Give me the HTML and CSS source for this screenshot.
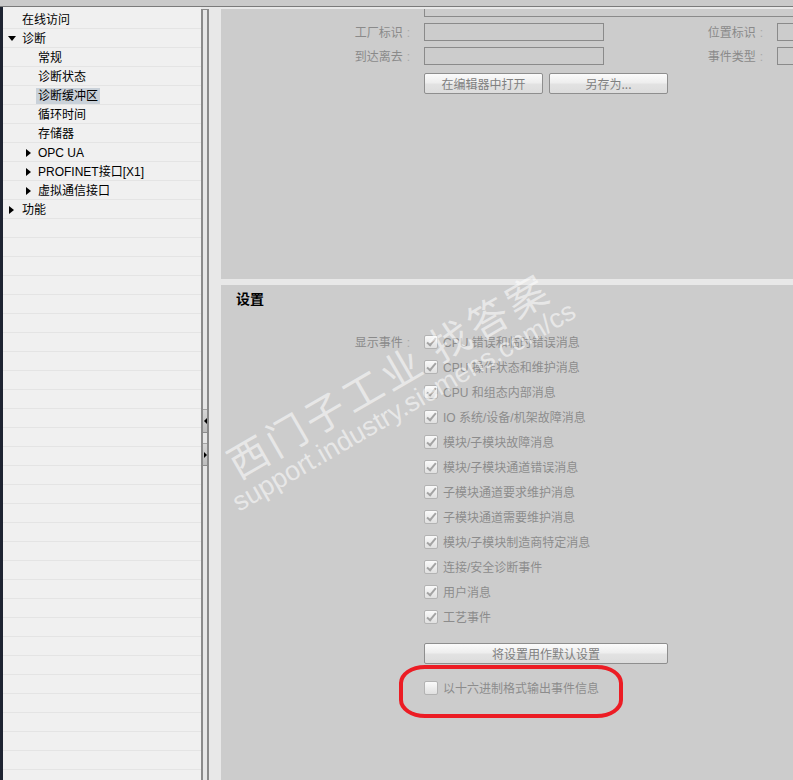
FILE: index.html
```html
<!DOCTYPE html>
<html lang="zh-CN">
<head>
<meta charset="utf-8">
<title>诊断缓冲区</title>
<link rel="stylesheet" href="styles.css">
</head>
<body>
<div class="app">
  <div class="topbar"></div>
  <div class="main">
    <div class="edge"></div>
    <nav class="tree">
      <div class="row l0"><span class="tw"></span>在线访问</div>
      <div class="row l0"><span class="tw"><span class="tri down"></span></span>诊断</div>
      <div class="row l1"><span class="tw"></span>常规</div>
      <div class="row l1"><span class="tw"></span>诊断状态</div>
      <div class="row l1"><span class="tw"></span><span class="sel">诊断缓冲区</span></div>
      <div class="row l1"><span class="tw"></span>循环时间</div>
      <div class="row l1"><span class="tw"></span>存储器</div>
      <div class="row l1"><span class="tw"><span class="tri right"></span></span>OPC UA</div>
      <div class="row l1"><span class="tw"><span class="tri right"></span></span>PROFINET接口[X1]</div>
      <div class="row l1"><span class="tw"><span class="tri right"></span></span>虚拟通信接口</div>
      <div class="row l0"><span class="tw"><span class="tri right r0"></span></span>功能</div>
      <div class="fill"></div>
    </nav>
    <div class="splitter">
      <div class="sbtn"><span class="arr aleft"></span></div>
      <div class="sbtn"><span class="arr aright"></span></div>
    </div>
    <div class="gutter"></div>
    <div class="content">
      <section class="upper">
        <div class="cutbox"></div>
        <div class="fields">
          <div class="lbl">工厂标识<span class="c">:</span></div>
          <div class="box"></div>
          <div class="lbl">位置标识<span class="c">:</span></div>
          <div class="box"></div>
          <div class="lbl">到达离去<span class="c">:</span></div>
          <div class="box"></div>
          <div class="lbl">事件类型<span class="c">:</span></div>
          <div class="box"></div>
        </div>
        <div class="btns">
          <button class="btn">在编辑器中打开</button>
          <button class="btn">另存为...</button>
        </div>
      </section>
      <section class="lower">
        <h2 class="title">设置</h2>
        <div class="events">
          <div class="lbl elbl">显示事件<span class="c">:</span></div>
          <ul class="checks">
            <li><span class="cb on"></span>CPU 错误和临时错误消息</li>
            <li><span class="cb on"></span>CPU 操作状态和维护消息</li>
            <li><span class="cb on"></span>CPU 和组态内部消息</li>
            <li><span class="cb on"></span>IO 系统/设备/机架故障消息</li>
            <li><span class="cb on"></span>模块/子模块故障消息</li>
            <li><span class="cb on"></span>模块/子模块通道错误消息</li>
            <li><span class="cb on"></span>子模块通道要求维护消息</li>
            <li><span class="cb on"></span>子模块通道需要维护消息</li>
            <li><span class="cb on"></span>模块/子模块制造商特定消息</li>
            <li><span class="cb on"></span>连接/安全诊断事件</li>
            <li><span class="cb on"></span>用户消息</li>
            <li><span class="cb on"></span>工艺事件</li>
          </ul>
        </div>
        <div class="actions">
          <button class="btn wide">将设置用作默认设置</button>
          <div class="hexrow"><span class="cb"></span>以十六进制格式输出事件信息</div>
        </div>
      </section>
    </div>
  </div>
  <span class="wm wm1">西门子工业 找答案</span>
  <span class="wm wm2">support.industry.siemens.com/cs</span>
  <div class="mark"></div>
</div>
</body>
</html>
```
FILE: styles.css
```css
html, body {
  margin: 0;
  padding: 0;
}
body {
  font-family: "Liberation Sans", "Noto Sans CJK SC", sans-serif;
  font-size: 12px;
  background: #e8e8e8;
}
.app {
  position: relative;
  width: 793px;
  height: 780px;
  overflow: hidden;
  background: #e8e8e8;
  display: flex;
  flex-direction: column;
}
.topbar {
  flex: none;
  height: 6px;
  background: #cacaca;
  border-bottom: 1px solid #7a7a7a;
}
.main {
  flex: 1;
  min-height: 0;
  display: flex;
}
.edge {
  width: 3px;
  background: #1e2432;
  flex: none;
}
.tree {
  width: 198px;
  flex: none;
  background: #f0f0f0;
  padding-top: 3px;
  display: flex;
  flex-direction: column;
  overflow: hidden;
  color: #000;
}
.row {
  height: 19px;
  box-sizing: border-box;
  border-bottom: 1px solid #e4e4e4;
  padding-top: 1px;
  display: flex;
  align-items: center;
  white-space: nowrap;
  line-height: 16px;
}
.l0 { padding-left: 5px; }
.l1 { padding-left: 21px; }
.tw {
  width: 14px;
  flex: none;
  display: flex;
  align-items: center;
}
.tri { display: block; width: 0; height: 0; }
.tri.down {
  border-top: 5px solid #000;
  border-left: 4px solid transparent;
  border-right: 4px solid transparent;
}
.tri.right {
  margin-left: 2px;
  border-left: 5px solid #000;
  border-top: 4px solid transparent;
  border-bottom: 4px solid transparent;
}
.tri.right.r0 { margin-left: 1px; }
.sel {
  background: #c9d1d9;
  padding: 0 2px;
  margin-left: -2px;
}
.fill {
  flex: 1;
  background: repeating-linear-gradient(to bottom, transparent 0 18px, #e4e4e4 18px 19px);
}
.splitter {
  width: 4px;
  flex: none;
  margin-top: 2px;
  border: 2px solid #8a8a8a;
  border-top-width: 1px;
  border-bottom: none;
  background: #e6e6e6;
  padding-top: 399px;
  display: flex;
  flex-direction: column;
  gap: 10px;
}
.sbtn {
  height: 22px;
  border-top: 1px solid #a4a4a4;
  border-bottom: 1px solid #8c8c8c;
  background: linear-gradient(to bottom, #d6d6d6, #bdbdbd);
  display: flex;
  align-items: center;
  justify-content: center;
}
.sbtn + .sbtn { height: 21px; }
.arr { display: block; width: 0; height: 0; }
.aleft {
  border-right: 3px solid #000;
  border-top: 3px solid transparent;
  border-bottom: 3px solid transparent;
}
.aright {
  border-left: 3px solid #000;
  border-top: 3px solid transparent;
  border-bottom: 3px solid transparent;
}
.gutter {
  width: 12px;
  flex: none;
  background: #e8e8e8;
}
.content {
  flex: 1;
  min-width: 0;
  margin-top: 2px;
  display: flex;
  flex-direction: column;
  gap: 6px;
}
.upper {
  flex: none;
  height: 270px;
  background: #cccccc;
  overflow: hidden;
}
.lower {
  flex: 1;
  background: #cccccc;
  overflow: hidden;
}
.cutbox {
  margin-left: 203px;
  width: 420px;
  height: 8px;
  box-sizing: border-box;
  border: 1px solid #8a8a8a;
  border-top: none;
}
.fields {
  margin-top: 6px;
  display: grid;
  grid-template-columns: 203px 180px 173px 180px;
  grid-auto-rows: 18px;
  row-gap: 6px;
}
.lbl {
  font-family: "Noto Sans CJK SC", sans-serif;
  color: #8a8a8a;
  text-align: right;
  padding-right: 14px;
  line-height: 18px;
  white-space: nowrap;
}
.c {
  font-family: "Liberation Sans", sans-serif;
  color: #a8a8a8;
  margin-left: 4px;
}
.box {
  box-sizing: border-box;
  border: 1px solid #8a8a8a;
}
.btns {
  margin: 8px 0 0 203px;
  display: flex;
  gap: 6px;
}
.btn {
  width: 119px;
  height: 21px;
  box-sizing: border-box;
  margin: 0;
  padding: 0;
  border: 1px solid #8e8e8e;
  border-radius: 2px;
  background: linear-gradient(to bottom, #fbfbfb 0%, #eeeeee 45%, #e2e2e2 55%, #dcdcdc 100%);
  color: #808080;
  font-family: "Noto Sans CJK SC", sans-serif;
  font-size: 12px;
  line-height: 19px;
}
.title {
  margin: 0;
  padding: 4px 0 0 15px;
  font-family: "Noto Sans CJK SC", sans-serif;
  font-size: 14px;
  font-weight: bold;
  line-height: 18px;
  color: #000;
}
.events {
  margin-top: 22px;
  display: grid;
  grid-template-columns: 203px 1fr;
  align-items: start;
}
.elbl {
  line-height: 25px;
}
.checks {
  list-style: none;
  margin: 0;
  padding: 0;
}
.checks li, .hexrow {
  height: 25px;
  display: flex;
  align-items: center;
  color: #8c8c8c;
  white-space: nowrap;
}
.cb {
  position: relative;
  flex: none;
  width: 14px;
  height: 14px;
  box-sizing: border-box;
  border: 1px solid #b3b3b3;
  border-radius: 2px;
  background: linear-gradient(to bottom, #fafafa, #e0e0e0);
  margin-right: 5px;
}
.cb.on::after {
  content: "";
  position: absolute;
  left: 4px;
  top: 0px;
  width: 3px;
  height: 8px;
  border: solid #a3a3a3;
  border-width: 0 2px 2px 0;
  transform: rotate(40deg);
}
.actions {
  margin-left: 203px;
  margin-top: 14px;
}
.btn.wide {
  display: block;
  width: 244px;
}
.hexrow {
  margin-top: 11px;
}
.wm {
  position: absolute;
  transform: rotate(-30deg);
  transform-origin: 0 0;
  white-space: nowrap;
  line-height: 1;
  color: rgba(255, 255, 255, 0.55);
  pointer-events: none;
}
.wm1 {
  left: 220px;
  top: 448px;
  font-family: "Noto Sans CJK SC", sans-serif;
  font-size: 40px;
  letter-spacing: 4px;
}
.wm2 {
  left: 228px;
  top: 493px;
  font-family: "Liberation Sans", sans-serif;
  font-size: 27px;
}
.mark {
  position: absolute;
  left: 399px;
  top: 665px;
  width: 224px;
  height: 53px;
  box-sizing: border-box;
  border: 4px solid #ec1c24;
  border-radius: 26px / 18px;
}
```
